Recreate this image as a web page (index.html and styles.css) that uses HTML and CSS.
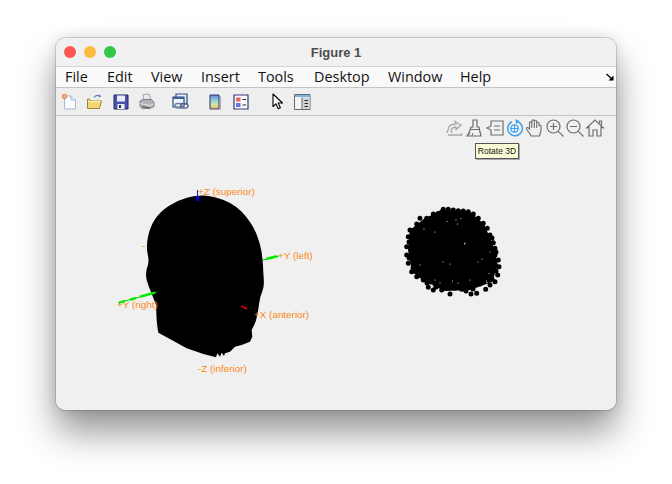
FILE: index.html
```html
<!DOCTYPE html>
<html lang="en">
<head>
<meta charset="utf-8">
<title>Figure 1</title>
<link rel="stylesheet" href="styles.css">
</head>
<body>
<div class="window">
  <header class="titlebar">
    <div class="lights"><span class="light red"></span><span class="light yellow"></span><span class="light green"></span></div>
    <div class="title">Figure 1</div>
  </header>
  <nav class="menubar">
    <span class="menu m-file">File</span><span class="menu m-edit">Edit</span><span class="menu m-view">View</span><span class="menu m-insert">Insert</span><span class="menu m-tools">Tools</span><span class="menu m-desktop">Desktop</span><span class="menu m-window">Window</span><span class="menu m-help">Help</span>
    <svg class="dock" width="8" height="8" viewBox="0 0 8 8"><path d="M.5 1L6.500 6.500" stroke="#000" stroke-width="1.300" fill="none"/><path d="M7.500 2.500V7.500H2.500Z" fill="#000"/></svg>
  </nav>
  <div class="toolbar">
    <svg class="tool t-new" width="17" height="17" viewBox="0 0 17 17"><path d="M3.500 3H10L14.500 7V16H3.500Z" fill="#fbfcff" stroke="#a9b7d3"/><path d="M10 3V7H14.500" fill="#dfe6f5" stroke="#a9b7d3"/><circle cx="3.500" cy="3.500" r="2.200" fill="#f6b08a" stroke="#e8703a" stroke-width=".9"/></svg>
    <svg class="tool t-open" width="17" height="17" viewBox="0 0 17 17"><path d="M1.500 6V15.500H13.500L15.500 8H5L3 6Z" fill="#f3d574" stroke="#9c8436"/><path d="M2 8.500H14.500" stroke="#fdf0b8"/><path d="M8 4.500C9 2.500 11.500 1.800 14 3" fill="none" stroke="#6a86b5" stroke-width="1.200"/><path d="M13 1L15.500 3.400 12.600 4.600Z" fill="#6a86b5"/></svg>
    <svg class="tool t-save" width="16" height="16" viewBox="0 0 16 16"><path d="M1 1H15V15H1Z" fill="#4a52ad" stroke="#20276c"/><path d="M4 1.500H12V7.500H4Z" fill="#e9ecf8"/><path d="M4.500 10H11.500V15H4.500Z" fill="#f1f1f1"/><path d="M6 11H8V14H6Z" fill="#222a66"/></svg>
    <svg class="tool t-print" width="16" height="17" viewBox="0 0 16 17"><path d="M4 1.500L10 1 12 7H5Z" fill="#e8edf3" stroke="#8b929a" stroke-width=".8"/><path d="M1 8L4 6.500H12.500L15 9V13.500L11 15.500H3L1 13Z" fill="#b0b2b4" stroke="#6d7073" stroke-width=".8"/><path d="M1.500 10.500L11 12.500 14.500 11" fill="none" stroke="#e5e5e5"/><path d="M3 13.500L11 15" stroke="#4f5255"/></svg>
    <svg class="tool t-link" width="17" height="17" viewBox="0 0 17 17"><path d="M4 1H15V11H4Z" fill="#e9eef7" stroke="#2c4a86" stroke-width="1.200"/><path d="M1 4H12V14H1Z" fill="#eef2f9" stroke="#2c4a86" stroke-width="1.200"/><path d="M1 4H12V6H1Z" fill="#3d5d99"/><rect x="3" y="10.500" width="7" height="4.600" rx="2.300" fill="none" stroke="#6c7f9f" stroke-width="1.400"/><rect x="8.500" y="10.500" width="7.500" height="4.600" rx="2.300" fill="none" stroke="#54698c" stroke-width="1.400"/></svg>
    <svg class="tool t-bar" width="12" height="16" viewBox="0 0 12 16"><defs><linearGradient id="cbar" x1="0" y1="0" x2="0" y2="1"><stop offset="0" stop-color="#6f7fe0"/><stop offset=".4" stop-color="#8fd4d8"/><stop offset=".7" stop-color="#d9e59c"/><stop offset="1" stop-color="#f0a878"/></linearGradient></defs><path d="M1 1H10V15H1Z" fill="url(#cbar)" stroke="#2a3468"/><path d="M11.500 2V16H2" fill="none" stroke="#b0b0b0"/></svg>
    <svg class="tool t-legend" width="16" height="16" viewBox="0 0 16 16"><path d="M1 1H15V15H1Z" fill="#fbfbff" stroke="#2c3a76" stroke-width="1.200"/><path d="M3 3.500H7.500V7.500H3Z" fill="#e2626a"/><path d="M3 9H7.500V13H3Z" fill="#6a6fe0"/><path d="M9.500 5.500H13M9.500 11H13" stroke="#222" stroke-width="1.200"/></svg>
    <svg class="tool t-cursor" width="12" height="17" viewBox="0 0 12 17"><path d="M1 1V13.500L4 10.800 6.200 15.800 8.400 14.800 6.200 10H10.500Z" fill="#fff" stroke="#000" stroke-width="1.100" stroke-linejoin="round"/></svg>
    <svg class="tool t-panel" width="17" height="16" viewBox="0 0 17 16"><path d="M.5 .5H16V15.500H.5Z" fill="#f4f4f4" stroke="#66686c"/><path d="M1 1H15.500V3H1Z" fill="#7fb1d6"/><path d="M8 3.500H15.500V15H8Z" fill="#d3d4d6"/><path d="M8 3.500V15" stroke="#66686c"/><path d="M10.500 6.500H14M10.500 9.500H14M10.500 12.500H14" stroke="#222"/></svg>
  </div>
  <main class="canvas">
    <svg class="plot" width="560" height="294" viewBox="56 116 560 294">
      <g class="labels">
        <text x="142" y="249">-</text>
      </g>
      <path transform="translate(110 180) scale(.33333)" fill="#000" d="M281 46.500Q300 48 320 53Q340 58 360 69Q380 80 395 95Q410 110 422.500 130Q435 150 442.500 170Q450 190 454 212.500Q458 235 459 257.500Q460 280 461.500 300Q463 320 456.500 335Q450 350 447.500 370Q445 390 441.500 407.500Q438 425 431.500 437.500L425 450 427 470 420 485 395 495 375 500 360 515 345 520 342 528 335 518 330 530 322 520 318 532 280 522 230 505 185 480 145 458 142 440 140 420 138 375Q125 340 116.500 320Q108 300 108 285Q108 270 113 257.500Q118 245 113 222.500Q108 200 114 170Q120 140 135 117.500Q150 95 175 78.500Q200 62 231 53.500Q262 45 281 46.500Z"/>
      <g class="axes">
        <path class="ax-green" d="M118 303L157 292"/>
        <path class="ax-green-t" d="M119 302.600L125 301M130 299.700L136 298M140 296.800L155 292.600"/>
        <path class="ax-green" d="M263 260L279 256"/>
        <path class="ax-green-t" d="M266 259L277 256.200"/>
        <path class="ax-blue" d="M197.500 190V197"/>
        <path class="ax-blue-t" d="M197.500 196V201"/>
        <path class="ax-red" d="M241 306L247 309"/>
      </g>
      <g class="labels">
        <text x="198" y="195">+Z (superior)</text>
        <text x="278" y="259">+Y (left)</text>
        <text x="117" y="308">+Y (right)</text>
        <text x="254" y="318">+X (anterior)</text>
        <text x="198" y="372">-Z (inferior)</text>
      </g>
      <g class="cloud">
        <path class="cloud-fill" d="M443 210L470 212 484 224 493 245 498 265 492 282 470 290 445 291 425 282 412 272 408 250 410 230 425 218Z"/>
        <path class="cloud-dots" d="M443.300 209.300h0M448.300 209.300h0M453.300 210h0M458.300 210.700h0M463.300 211h0M468.300 211.700h0M473.300 214h0M478.300 218.300h0M483.300 223.300h0M487.300 228.300h0M490 235h0M493.300 242.700h0M495 248.300h0M495 255h0M498.300 260h0M499 266.700h0M497.700 275h0M495 281.700h0M490 285h0M485.700 289.300h0M476.700 293.300h0M471 294h0M461.700 289.300h0M450 294h0M441.700 290h0M433.300 290h0M428.300 287.300h0M423.300 280h0M416.700 276.700h0M411.700 271.700h0M408.300 263.300h0M406.700 255h0M406.700 246.700h0M408.300 236.700h0M410 230h0M416.700 224h0M420 218.300h0M426.700 218.300h0M433.300 214h0M441.700 211.700h0M430 222h0M460 214h0M475 225h0M484 240h0M489 270h0M480 284h0M440 284h0M420 270h0M415 240h0M455 288h0M466 291h0M436 287h0M446 213h0M438 213.500h0M412 233h0M409 242h0M409 258h0M413 268h0M419 274h0M427 283h0M492 238h0M496 252h0M496 271h0M492 279h0M473 289h0M445 287h0"/>
        <path class="cloud-specks" d="M447 221.500h0M456 220h0M457.500 224h0M461 218.500h0M435 232h0M465 243h0M464.500 244h0M490 252h0M482 259h0M443 262h0M450 264h0M478 262h0M489 273.500h0M486.500 281h0M487 282.500h0M470 280h0M435 280h0M440 283h0M458 283h0M432 284.500h0M452.500 281h0M420 265h0M424 229h0"/>
      </g>
    </svg>
    <div class="axtools">
      <svg class="ax" width="20" height="20" viewBox="0 0 20 20"><path d="M2 15L4 9C5 6.500 8 6 11 6L10 3.500 16 7 11 11.500 11 9C8 9 7 10 6 12L7 15M3 17H16.500M16.500 15V18" fill="none" stroke="#a8a8a8" stroke-width="1.300"/></svg>
      <svg class="ax" width="20" height="20" viewBox="0 0 20 20"><path d="M8 2H12V9H14L15 14 16 18H2C4 16 5 13 6 9H8Z" fill="none" stroke="#6e6e6e" stroke-width="1.200"/><path d="M6 11.500H14.800M5 14.500L3.500 17M8 15L7 17.800" fill="none" stroke="#6e6e6e"/></svg>
      <svg class="ax" width="20" height="20" viewBox="0 0 20 20"><path d="M6 3H18V17H6V12L2 10 6 8Z" fill="none" stroke="#6e6e6e" stroke-width="1.200"/><path d="M9 8H15M9 12H15" stroke="#6e6e6e" stroke-width="1.200"/></svg>
      <svg class="ax" width="20" height="20" viewBox="0 0 20 20"><path d="M12 3.400A7.300 7.300 0 1 1 7 3.800" fill="none" stroke="#39a0f0" stroke-width="1.500"/><path d="M10.500 1L14.500 3.200 11 6Z" fill="#39a0f0"/><circle cx="9.500" cy="10.500" r="3.700" fill="none" stroke="#39a0f0" stroke-width="1.300"/><path d="M5.800 10.500H13.200M9.500 7V14" stroke="#39a0f0"/></svg>
      <svg class="ax" width="20" height="20" viewBox="0 0 20 20"><path d="M6 18C5 15 2 13 1.500 10.500 1.500 9 3 9 4.500 11V5C4.500 3.500 6.500 3.500 6.800 5V3C7 1.500 9 1.500 9.300 3V3.200C9.500 1.800 11.500 2 11.700 3.500V5C12 3.800 14 4 14 5.500V8C14.300 7 16 7.200 16 8.500V12C16 14 15 15.500 14.500 18ZM6.800 5V10M9.300 3V10M11.700 4V10" fill="none" stroke="#6e6e6e" stroke-width="1.100"/></svg>
      <svg class="ax" width="20" height="20" viewBox="0 0 20 20"><circle cx="8.500" cy="8.500" r="6.500" fill="none" stroke="#6e6e6e" stroke-width="1.200"/><path d="M13.300 13.300L18.500 18.500M5 8.500H12M8.500 5V12" stroke="#6e6e6e" stroke-width="1.200"/></svg>
      <svg class="ax" width="20" height="20" viewBox="0 0 20 20"><circle cx="8.500" cy="8.500" r="6.500" fill="none" stroke="#6e6e6e" stroke-width="1.200"/><path d="M13.300 13.300L18.500 18.500M5 8.500H12" stroke="#6e6e6e" stroke-width="1.200"/></svg>
      <svg class="ax" width="20" height="20" viewBox="0 0 20 20"><path d="M1 10.500L10 2 19 10.500M4 8.500V18H8V12H12V18H16V8.500M14.500 5V3H16.500V7" fill="none" stroke="#6e6e6e" stroke-width="1.200"/></svg>
    </div>
    <div class="tooltip">Rotate 3D</div>
  </main>
</div>
</body>
</html>
```
FILE: styles.css
```css
* { box-sizing: border-box; }
html, body { margin: 0; padding: 0; background: #fff; }
body { width: 672px; height: 484px; overflow: hidden; padding: 38px 56px 0; font-family: "Liberation Sans", Arial, sans-serif; }
.window {
  position: relative; width: 560px; height: 372px; border-radius: 10px; overflow: hidden; background: #f0f0f0;
  display: flex; flex-direction: column;
}
body::before {
  content: ""; position: absolute; left: 56px; top: 38px; width: 560px; height: 372px; border-radius: 10px;
  box-shadow: 0 0 0 1px rgba(0,0,0,.14), 0 22px 36px 0 rgba(0,0,0,.42), 0 0 14px rgba(0,0,0,.12);
}
.titlebar { height: 29px; flex: none; background: #f1f1f1; border-bottom: 1px solid #d3d3d3; display: flex; align-items: center; position: relative; padding-left: 8px; }
.lights { display: flex; gap: 8px; }
.light { width: 12px; height: 12px; border-radius: 50%; }
.red { background: #fc5753; }
.yellow { background: #fdbc40; }
.green { background: #33c748; }
.title { position: absolute; left: 0; right: 0; text-align: center; font-size: 13px; font-weight: 700; color: #4c4c4c; }
.menubar { height: 21px; flex: none; background: #f9f9f9; border-bottom: 1px solid #c4c4c4; display: flex; align-items: center; position: relative; padding: 0 0 2px 9px; font-family: "Open Sans", sans-serif; font-size: 14.4px; color: #111; }
.menu { display: block; }
.m-file { width: 42px; } .m-edit { width: 44px; } .m-view { width: 50px; } .m-insert { width: 57px; }
.m-tools { width: 56px; } .m-desktop { width: 74px; } .m-window { width: 72px; }
.dock { margin-left: auto; margin-right: 2px; margin-top: 1px; }
.toolbar { height: 28px; flex: none; background: #eeeeee; border-bottom: 1px solid #c4c4c4; display: flex; align-items: center; padding-left: 5px; }
.tool { flex: none; display: block; }
.t-open { margin-left: 8px; } .t-save { margin-left: 10px; } .t-print { margin-left: 10px; } .t-link { margin-left: 17px; }
.t-bar { margin-left: 20px; } .t-legend { margin-left: 12px; } .t-cursor { margin-left: 23px; } .t-panel { margin-left: 10px; }
.canvas { flex: 1; position: relative; background: #f0f0f0; }
.plot { display: block; position: absolute; left: 0; top: 0; }
.labels text { font-family: "Liberation Sans", Arial, sans-serif; font-size: 9.9px; fill: #fb8a12; }
.axes path { fill: none; }
.ax-green { stroke: #00c800; stroke-width: 1; }
.ax-green-t { stroke: #00ee00; stroke-width: 2.5; }
.ax-blue { stroke: #2020a0; stroke-width: 1; }
.ax-blue-t { stroke: #0000e0; stroke-width: 3; }
.ax-red { stroke: #e00000; stroke-width: 1.5; }
.cloud-fill { fill: #000; }
.cloud-dots { fill: none; stroke: #000; stroke-width: 5; stroke-linecap: round; }
.cloud-specks { fill: none; stroke: #e8e8e8; stroke-width: 1.2; stroke-linecap: round; }
.axtools { position: absolute; left: 389px; top: 2px; display: flex; }
.ax { display: block; flex: none; }
.tooltip { position: absolute; left: 419px; top: 27px; width: 44px; height: 16px; background: #fbfbd8; border: 1px solid #555; box-shadow: 1px 1px 0 #aaa; font-size: 8.5px; line-height: 14px; text-align: center; color: #111; }
```
